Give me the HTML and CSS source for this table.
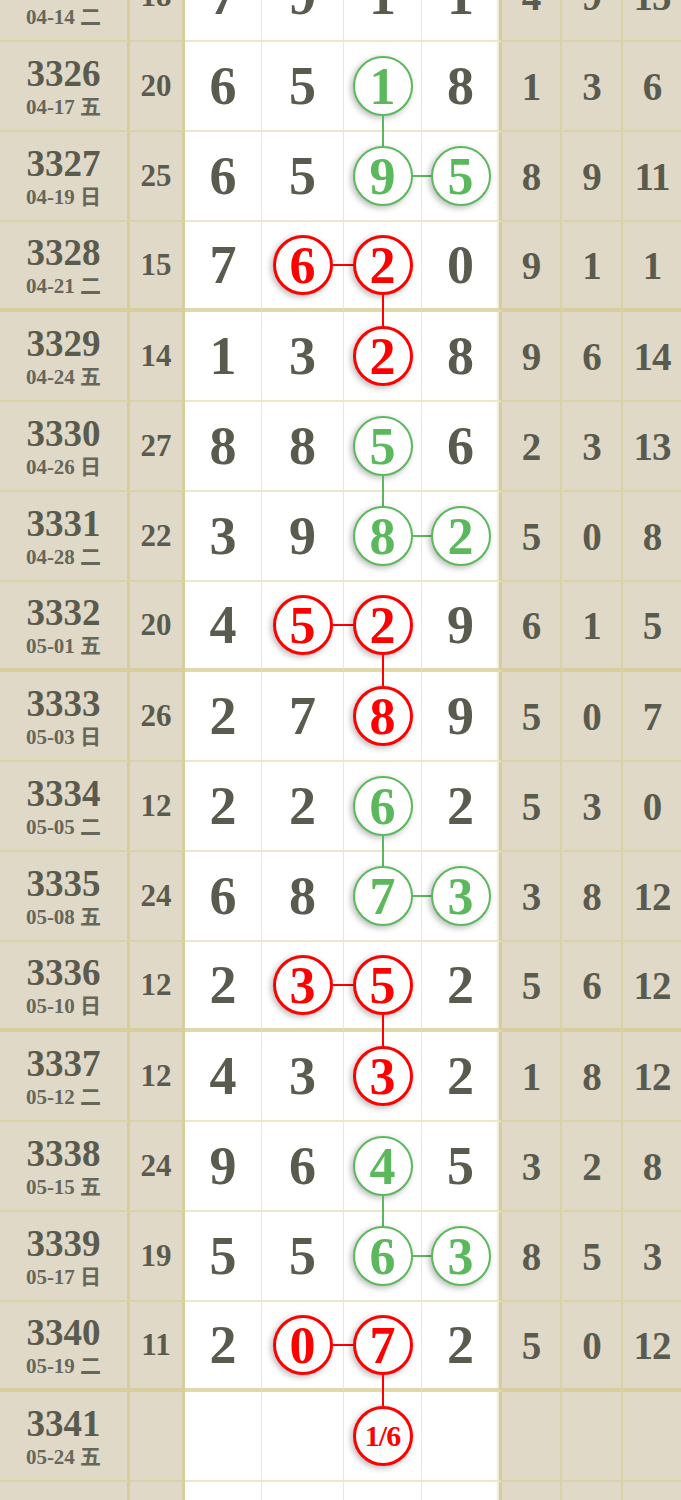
FILE: index.html
```html
<!DOCTYPE html>
<html>
<head>
  <title>走势图</title>
  <meta name="viewport" content="width=device-width, initial-scale=1.0">
  <link rel="stylesheet" href="styles.css">
</head>
<body>

  <div class="chart">

    <!-- 3325 - 3328 -->
    <div class="row">
      <div class="c issue"><span class="no">3325</span><span class="date">04-14 二</span></div>
      <div class="c sum">18</div>
      <div class="c num">7</div><div class="c num">9</div><div class="c num">1</div><div class="c num last">1</div>
      <div class="c miss">4</div><div class="c miss">9</div><div class="c miss">15</div>
    </div>
    <div class="row">
      <div class="c issue"><span class="no">3326</span><span class="date">04-17 五</span></div>
      <div class="c sum">20</div>
      <div class="c num">6</div><div class="c num">5</div>
      <div class="c num"><span class="ball g down">1</span></div>
      <div class="c num last">8</div>
      <div class="c miss">1</div><div class="c miss">3</div><div class="c miss">6</div>
    </div>
    <div class="row">
      <div class="c issue"><span class="no">3327</span><span class="date">04-19 日</span></div>
      <div class="c sum">25</div>
      <div class="c num">6</div><div class="c num">5</div>
      <div class="c num"><span class="ball g link">9</span></div>
      <div class="c num last"><span class="ball g">5</span></div>
      <div class="c miss">8</div><div class="c miss">9</div><div class="c miss">11</div>
    </div>
    <div class="row end">
      <div class="c issue"><span class="no">3328</span><span class="date">04-21 二</span></div>
      <div class="c sum">15</div>
      <div class="c num">7</div>
      <div class="c num"><span class="ball r link">6</span></div>
      <div class="c num"><span class="ball r down">2</span></div>
      <div class="c num last">0</div>
      <div class="c miss">9</div><div class="c miss">1</div><div class="c miss">1</div>
    </div>

    <!-- 3329 - 3332 -->
    <div class="row">
      <div class="c issue"><span class="no">3329</span><span class="date">04-24 五</span></div>
      <div class="c sum">14</div>
      <div class="c num">1</div><div class="c num">3</div>
      <div class="c num"><span class="ball r">2</span></div>
      <div class="c num last">8</div>
      <div class="c miss">9</div><div class="c miss">6</div><div class="c miss">14</div>
    </div>
    <div class="row">
      <div class="c issue"><span class="no">3330</span><span class="date">04-26 日</span></div>
      <div class="c sum">27</div>
      <div class="c num">8</div><div class="c num">8</div>
      <div class="c num"><span class="ball g down">5</span></div>
      <div class="c num last">6</div>
      <div class="c miss">2</div><div class="c miss">3</div><div class="c miss">13</div>
    </div>
    <div class="row">
      <div class="c issue"><span class="no">3331</span><span class="date">04-28 二</span></div>
      <div class="c sum">22</div>
      <div class="c num">3</div><div class="c num">9</div>
      <div class="c num"><span class="ball g link">8</span></div>
      <div class="c num last"><span class="ball g">2</span></div>
      <div class="c miss">5</div><div class="c miss">0</div><div class="c miss">8</div>
    </div>
    <div class="row end">
      <div class="c issue"><span class="no">3332</span><span class="date">05-01 五</span></div>
      <div class="c sum">20</div>
      <div class="c num">4</div>
      <div class="c num"><span class="ball r link">5</span></div>
      <div class="c num"><span class="ball r down">2</span></div>
      <div class="c num last">9</div>
      <div class="c miss">6</div><div class="c miss">1</div><div class="c miss">5</div>
    </div>

    <!-- 3333 - 3336 -->
    <div class="row">
      <div class="c issue"><span class="no">3333</span><span class="date">05-03 日</span></div>
      <div class="c sum">26</div>
      <div class="c num">2</div><div class="c num">7</div>
      <div class="c num"><span class="ball r">8</span></div>
      <div class="c num last">9</div>
      <div class="c miss">5</div><div class="c miss">0</div><div class="c miss">7</div>
    </div>
    <div class="row">
      <div class="c issue"><span class="no">3334</span><span class="date">05-05 二</span></div>
      <div class="c sum">12</div>
      <div class="c num">2</div><div class="c num">2</div>
      <div class="c num"><span class="ball g down">6</span></div>
      <div class="c num last">2</div>
      <div class="c miss">5</div><div class="c miss">3</div><div class="c miss">0</div>
    </div>
    <div class="row">
      <div class="c issue"><span class="no">3335</span><span class="date">05-08 五</span></div>
      <div class="c sum">24</div>
      <div class="c num">6</div><div class="c num">8</div>
      <div class="c num"><span class="ball g link">7</span></div>
      <div class="c num last"><span class="ball g">3</span></div>
      <div class="c miss">3</div><div class="c miss">8</div><div class="c miss">12</div>
    </div>
    <div class="row end">
      <div class="c issue"><span class="no">3336</span><span class="date">05-10 日</span></div>
      <div class="c sum">12</div>
      <div class="c num">2</div>
      <div class="c num"><span class="ball r link">3</span></div>
      <div class="c num"><span class="ball r down">5</span></div>
      <div class="c num last">2</div>
      <div class="c miss">5</div><div class="c miss">6</div><div class="c miss">12</div>
    </div>

    <!-- 3337 - 3340 -->
    <div class="row">
      <div class="c issue"><span class="no">3337</span><span class="date">05-12 二</span></div>
      <div class="c sum">12</div>
      <div class="c num">4</div><div class="c num">3</div>
      <div class="c num"><span class="ball r">3</span></div>
      <div class="c num last">2</div>
      <div class="c miss">1</div><div class="c miss">8</div><div class="c miss">12</div>
    </div>
    <div class="row">
      <div class="c issue"><span class="no">3338</span><span class="date">05-15 五</span></div>
      <div class="c sum">24</div>
      <div class="c num">9</div><div class="c num">6</div>
      <div class="c num"><span class="ball g down">4</span></div>
      <div class="c num last">5</div>
      <div class="c miss">3</div><div class="c miss">2</div><div class="c miss">8</div>
    </div>
    <div class="row">
      <div class="c issue"><span class="no">3339</span><span class="date">05-17 日</span></div>
      <div class="c sum">19</div>
      <div class="c num">5</div><div class="c num">5</div>
      <div class="c num"><span class="ball g link">6</span></div>
      <div class="c num last"><span class="ball g">3</span></div>
      <div class="c miss">8</div><div class="c miss">5</div><div class="c miss">3</div>
    </div>
    <div class="row end">
      <div class="c issue"><span class="no">3340</span><span class="date">05-19 二</span></div>
      <div class="c sum">11</div>
      <div class="c num">2</div>
      <div class="c num"><span class="ball r link">0</span></div>
      <div class="c num"><span class="ball r down">7</span></div>
      <div class="c num last">2</div>
      <div class="c miss">5</div><div class="c miss">0</div><div class="c miss">12</div>
    </div>

    <!-- next draw -->
    <div class="row">
      <div class="c issue"><span class="no">3341</span><span class="date">05-24 五</span></div>
      <div class="c sum"></div>
      <div class="c num"></div><div class="c num"></div>
      <div class="c num"><span class="ball r small">1/6</span></div>
      <div class="c num last"></div>
      <div class="c miss"></div><div class="c miss"></div><div class="c miss"></div>
    </div>
    <div class="row">
      <div class="c issue"></div>
      <div class="c sum"></div>
      <div class="c num"></div><div class="c num"></div><div class="c num"></div><div class="c num last"></div>
      <div class="c miss"></div><div class="c miss"></div><div class="c miss"></div>
    </div>

  </div>

</body>
</html>
```

FILE: styles.css
```css
body {
  margin: 0;
  background: #fff;
  color: #595b4f;
  font-family: 'Liberation Serif', 'Noto Sans CJK SC', serif;
  font-weight: bold;
  overflow: hidden;
}

.chart {
  margin-top: -48px;
}

.row {
  display: grid;
  grid-template-columns: 130px 55px 77px 82px 78px 80px 60px 61px 58px;
  height: 90px;
}

.c {
  box-sizing: border-box;
  display: flex;
  align-items: center;
  justify-content: center;
  border-bottom: 2px solid #ece6cb;
  border-right: 1px solid #ece6cb;
}

.issue, .sum, .miss {
  background: #e1d9c8;
  border-bottom-color: #dcd2a8;
  border-right: 2px solid #dcd2a8;
}

.issue, .sum {
  border-right: 3px solid #d8cd9c;
}

.row.end .c {
  border-bottom: 4px solid #e0d7ab;
}

.row.end .issue,
.row.end .sum,
.row.end .miss {
  border-bottom-color: #d9cf9e;
}

.issue {
  flex-direction: column;
}

.issue .no {
  font-size: 37px;
  line-height: 38px;
}

.issue .date {
  font-size: 21px;
  line-height: 22px;
  margin-top: 3px;
  color: #65675b;
}

.sum {
  font-size: 31px;
}

.num {
  background: #fff;
  font-size: 54px;
}

.num.last {
  border-right: 3px solid #d8cd9c;
  box-shadow: inset -3px 0 3px -2px rgba(180, 165, 110, 0.4);
}

.miss {
  font-size: 39px;
  letter-spacing: -1px;
}

.miss:last-child {
  border-right: none;
}

/* drawn balls */
.ball {
  position: relative;
  box-sizing: border-box;
  width: 60px;
  height: 60px;
  border-radius: 50%;
  background: #fff;
  display: flex;
  align-items: center;
  justify-content: center;
  font-size: 52px;
  box-shadow: -2px 2px 6px rgba(0, 0, 0, 0.28);
}

.ball.g {
  color: #5cb85c;
  border: 2.5px solid #5cb85c;
}

.ball.r {
  color: #f00;
  border: 3px solid #f00;
}

.ball.small {
  font-size: 30px;
  letter-spacing: -1px;
}

.ball.down::after,
.ball.link::before {
  content: "";
  position: absolute;
}

.ball.down::after {
  top: 100%;
  left: 50%;
  margin-left: -1px;
  width: 2px;
  height: 34px;
}

.ball.link::before {
  left: 100%;
  top: 50%;
  margin-top: -1px;
  height: 2px;
  width: 24px;
}

.ball.g::after, .ball.g::before {
  background: #5cb85c;
}

.ball.r::after, .ball.r::before {
  background: #f00;
}
```
